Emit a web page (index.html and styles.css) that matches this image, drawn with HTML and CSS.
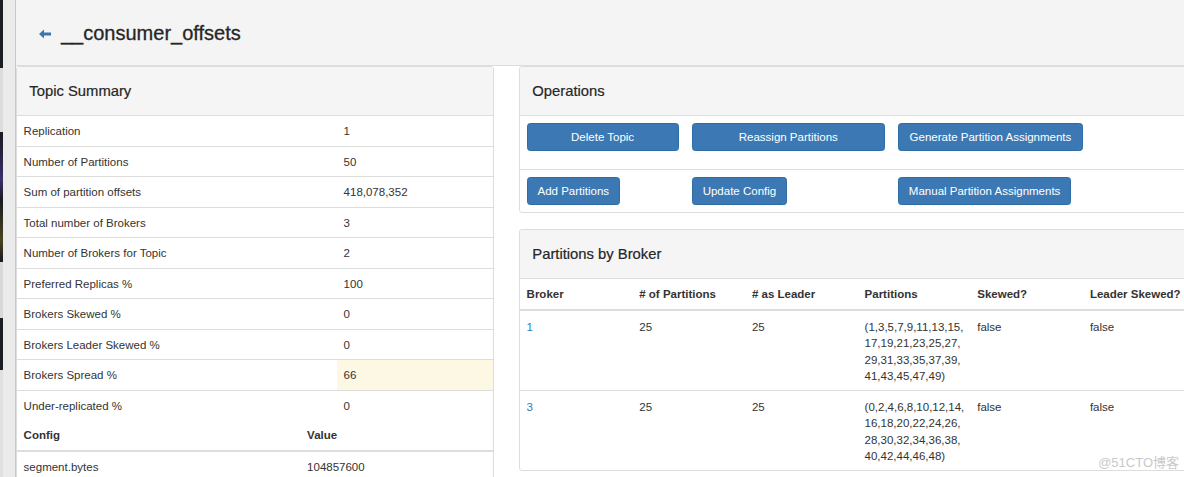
FILE: index.html
```html
<!DOCTYPE html>
<html lang="en">
<head>
<meta charset="utf-8">
<title>__consumer_offsets</title>
<link rel="stylesheet" href="styles.css">
</head>
<body>
<div class="app">
  <aside class="side-strip"><div class="term"></div></aside>
  <main class="page">
    <header class="page-header">
      <a class="back" href="#" aria-label="Back">
        <svg width="12" height="10" viewBox="0 0 12 10"><path d="M0 5 L5 0.5 L5 3.5 L12 3.5 L12 6.5 L5 6.5 L5 9.5 Z" fill="#3b76b1"/></svg>
      </a>
      <h1 class="title">__consumer_offsets</h1>
    </header>
    <div class="row">
      <div class="col-left">
        <section class="panel">
          <div class="panel-heading"><h3 class="panel-title">Topic Summary</h3></div>
          <table class="table summary">
            <tbody>
              <tr><td class="key">Replication</td><td>1</td></tr>
              <tr><td class="key">Number of Partitions</td><td>50</td></tr>
              <tr><td class="key">Sum of partition offsets</td><td>418,078,352</td></tr>
              <tr><td class="key">Total number of Brokers</td><td>3</td></tr>
              <tr><td class="key">Number of Brokers for Topic</td><td>2</td></tr>
              <tr><td class="key">Preferred Replicas %</td><td>100</td></tr>
              <tr><td class="key">Brokers Skewed %</td><td>0</td></tr>
              <tr><td class="key">Brokers Leader Skewed %</td><td>0</td></tr>
              <tr><td class="key">Brokers Spread %</td><td class="warning">66</td></tr>
              <tr><td class="key">Under-replicated %</td><td>0</td></tr>
            </tbody>
          </table>
          <table class="table config">
            <thead>
              <tr><th class="key">Config</th><th>Value</th></tr>
            </thead>
            <tbody>
              <tr><td class="key">segment.bytes</td><td>104857600</td></tr>
            </tbody>
          </table>
        </section>
      </div>
      <div class="col-right">
        <section class="panel">
          <div class="panel-heading"><h3 class="panel-title">Operations</h3></div>
          <div class="ops">
            <div class="ops-row first">
              <button class="btn btn-block">Delete Topic</button>
              <button class="btn btn-block">Reassign Partitions</button>
              <button class="btn btn-block">Generate Partition Assignments</button>
            </div>
            <div class="ops-row">
              <button class="btn">Add Partitions</button>
              <button class="btn">Update Config</button>
              <button class="btn">Manual Partition Assignments</button>
            </div>
          </div>
        </section>
        <section class="panel">
          <div class="panel-heading"><h3 class="panel-title">Partitions by Broker</h3></div>
          <table class="table brokers">
            <thead>
              <tr><th>Broker</th><th># of Partitions</th><th># as Leader</th><th>Partitions</th><th>Skewed?</th><th>Leader Skewed?</th></tr>
            </thead>
            <tbody>
              <tr>
                <td><a href="#">1</a></td><td>25</td><td>25</td>
                <td>(1,3,5,7,9,11,13,15,<br>17,19,21,23,25,27,<br>29,31,33,35,37,39,<br>41,43,45,47,49)</td>
                <td>false</td><td>false</td>
              </tr>
              <tr>
                <td><a href="#">3</a></td><td>25</td><td>25</td>
                <td>(0,2,4,6,8,10,12,14,<br>16,18,20,22,24,26,<br>28,30,32,34,36,38,<br>40,42,44,46,48)</td>
                <td>false</td><td>false</td>
              </tr>
            </tbody>
          </table>
        </section>
      </div>
    </div>
  </main>
</div>
<div class="watermark">@51CTO博客</div>
</body>
</html>
```

FILE: styles.css
```css
* { box-sizing: border-box; }

html, body {
  margin: 0;
  height: 100%;
  overflow: hidden;
}

body {
  font-family: "Liberation Sans", Arial, sans-serif;
  font-size: 11.5px;
  line-height: 16.5px;
  color: #333;
  background: #fff;
}

.app {
  display: flex;
  min-height: 477px;
}

.side-strip {
  width: 16px;
  flex: none;
  display: flex;
  background: #ebebeb;
  border-right: 1px solid #c8c8c8;
}

.term {
  width: 3px;
  background: linear-gradient(to bottom,
    #1b1f24 0, #1b1f24 68px,
    #dcdcdc 68px, #dcdcdc 132px,
    #1a1a1e 132px, #3b2f6a 180px, #1a1a1e 200px, #4a4520 240px, #1a1a1e 262px,
    #d8d8d8 262px, #d8d8d8 318px,
    #1b1f24 318px, #1b1f24 370px,
    #e0e0e0 370px, #e0e0e0 477px);
}

.page {
  flex: 1;
  min-width: 0;
}

.page-header {
  height: 66px;
  background: #f4f4f4;
  border-bottom: 1px solid #dcdcdc;
  display: flex;
  align-items: center;
  gap: 10px;
  padding-left: 23px;
}

.back {
  display: flex;
  align-items: center;
  margin-top: 2px;
}

.title {
  margin: 0;
  font-size: 20px;
  font-weight: 500;
  line-height: 22px;
  color: #262626;
  -webkit-text-stroke: 0.3px #262626;
}

.row {
  display: flex;
  gap: 25px;
}

.col-left {
  width: 478px;
  flex: none;
}

.col-right {
  width: 678px;
  flex: none;
}

.panel {
  border: 1px solid #ddd;
  border-radius: 3px;
  background: #fff;
  margin-bottom: 16.5px;
  overflow: hidden;
}

.panel-heading {
  height: 49px;
  background: #f5f5f5;
  border-bottom: 1px solid #ddd;
  padding: 1px 12.3px 0;
  display: flex;
  align-items: center;
}

.panel-title {
  margin: 0;
  font-size: 14.8px;
  font-weight: 500;
  color: #262626;
  -webkit-text-stroke: 0.2px #262626;
}

.table {
  width: 100%;
  border-collapse: collapse;
  table-layout: fixed;
}

.table td,
.table th {
  padding: 7px 6.6px 6px;
  text-align: left;
  vertical-align: top;
}

.table th {
  font-weight: bold;
}

.table tbody tr + tr td {
  border-top: 1px solid #ddd;
}

.table thead th {
  border-bottom: 2px solid #ddd;
}

.brokers tbody td {
  padding-top: 8px;
  padding-bottom: 5.2px;
}

.summary .key { width: 320px; }
.config .key { width: 283.5px; }

.warning { background: #fcf8e3; }

.ops-row {
  display: grid;
  grid-template-columns: 152px 193px 185px;
  column-gap: 13.2px;
  padding: 6.6px;
  align-items: start;
}

.ops-row.first {
  padding-bottom: 18.9px;
}

.ops-row + .ops-row {
  border-top: 1px solid #ddd;
}

.btn {
  height: 28px;
  padding: 1px 9.9px 0;
  font-family: inherit;
  font-size: 11.5px;
  line-height: 16.5px;
  color: #fff;
  background: #3c79b4;
  border: 1px solid #2e6da4;
  border-radius: 3.3px;
  justify-self: start;
  cursor: pointer;
}

.btn-block {
  justify-self: stretch;
}

.brokers a {
  color: #337ab7;
  text-decoration: none;
}

.watermark {
  position: absolute;
  right: 5px;
  bottom: 6px;
  font-family: "Liberation Sans", "Noto Sans CJK SC", sans-serif;
  font-size: 13px;
  color: #c9c9c9;
}
```
